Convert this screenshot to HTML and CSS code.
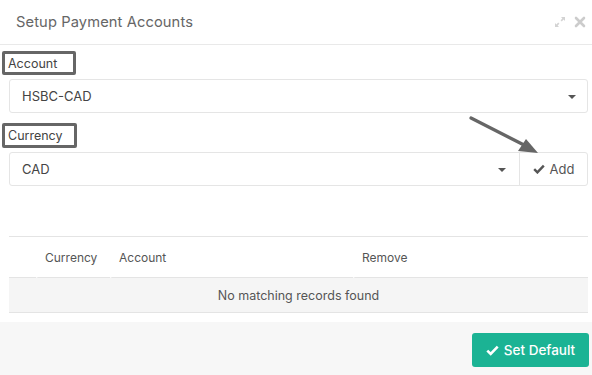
FILE: index.html
```html
<!DOCTYPE html>
<html>
<head>
<meta charset="utf-8">
<link rel="stylesheet" href="styles.css">
</head>
<body>
<div class="modal">
  <div class="header">
    <div class="title">Setup Payment Accounts</div>
    <div class="tools">
      <svg class="ico" width="12" height="12" viewBox="0 0 12 12"><path d="M7 1h4v4L9.6 3.6 7.8 5.4 6.6 4.2 8.4 2.4z M5 11H1V7l1.4 1.4 1.8-1.8 1.2 1.2-1.8 1.8z" fill="#d3d3d3"/></svg>
      <svg class="ico" width="12" height="12" viewBox="0 0 12 12"><path d="M2 2l8 8M10 2l-8 8" stroke="#cccccc" stroke-width="2.6" stroke-linecap="round"/></svg>
    </div>
  </div>
  <div class="body">
    <div class="lbl">Account</div>
    <div class="select">
      <span>HSBC-CAD</span>
      <span class="caret"></span>
    </div>
    <div class="lbl lbl2">Currency</div>
    <div class="group">
      <div class="select grow">
        <span>CAD</span>
        <span class="caret"></span>
      </div>
      <div class="addbtn"><svg width="12" height="10" viewBox="0 0 12 10"><path d="M1.2 5.2l3.2 3.2 6.4-6.8" stroke="#555" stroke-width="2.4" fill="none"/></svg>Add</div>
    </div>
    <table class="tbl">
      <thead>
        <tr><th class="c0"></th><th class="c1">Currency</th><th class="c2">Account</th><th class="c3">Remove</th></tr>
      </thead>
      <tbody>
        <tr><td colspan="4" class="empty">No matching records found</td></tr>
      </tbody>
    </table>
  </div>
  <div class="footer">
    <div class="btn"><svg width="13" height="11" viewBox="0 0 13 11"><path d="M1.3 5.6l3.4 3.4 7-7.4" stroke="#fff" stroke-width="2.6" fill="none"/></svg>Set Default</div>
  </div>
  <svg class="arrow" width="592" height="375" viewBox="0 0 592 375">
    <line x1="471" y1="118" x2="526" y2="146" stroke="#666" stroke-width="3.2" stroke-linecap="round"/>
    <path d="M538 153 L518 151 L526 139 Z" fill="#666"/>
  </svg>
</div>
</body>
</html>
```
FILE: styles.css
```css
* { box-sizing: border-box; }
html, body { margin: 0; padding: 0; }
body {
  font-family: "Inter", "Noto Sans", sans-serif;
  color: #555;
  background: #fff;
  width: 592px;
  height: 375px;
  overflow: hidden;
}
.modal {
  position: relative;
  width: 592px;
  height: 375px;
  display: flex;
  flex-direction: column;
}
.header {
  height: 45px;
  border-bottom: 1px solid #e9e9e9;
  display: flex;
  align-items: center;
  justify-content: space-between;
  padding: 0 6px 0 16px;
}
.title {
  font-size: 14.7px;
  color: #666;
  letter-spacing: 0.1px;
}
.tools { display: flex; gap: 8px; align-items: center; }
.body {
  flex: 1;
  padding: 6px 4px 0 9px;
}
.lbl {
  display: inline-block;
  width: 74px;
  font-size: 12.5px;
  color: #444;
  border: 3px solid #666;
  border-radius: 2px;
  margin-left: -7px;
  padding: 1px 0 1px 3px;
  line-height: 17px;
  height: 24px;
}
.lbl2 { width: 75px; margin-top: 10px; height: 25px; line-height: 18px; }
.select {
  margin-top: 4px;
  height: 34px;
  border: 1px solid #e5e5e5;
  border-radius: 3px;
  display: flex;
  align-items: center;
  justify-content: space-between;
  padding: 0 11px 0 12px;
  font-size: 13px;
  color: #444;
}
.caret {
  width: 0; height: 0;
  border-left: 4px solid transparent;
  border-right: 4px solid transparent;
  border-top: 4px solid #555;
  margin-top: 1px;
}
.group {
  display: flex;
  margin-top: 4px;
}
.group .select {
  margin-top: 0;
  flex: 1;
  border-radius: 3px 0 0 3px;
  padding-right: 13px;
}
.addbtn {
  width: 69px;
  height: 34px;
  border: 1px solid #e5e5e5;
  margin-left: -1px;
  border-radius: 0 3px 3px 0;
  display: flex;
  align-items: center;
  justify-content: center;
  gap: 5px;
  font-size: 13px;
  color: #555;
}
.tbl {
  margin-top: 50px;
  width: 579px;
  border-collapse: separate;
  border-spacing: 0;
  font-size: 12px;
  border-top: 1px solid #e4e4e4;
}
.tbl th {
  font-weight: normal;
  text-align: left;
  height: 41px;
  padding: 0 7px;
  color: #555;
  border-bottom: 1px solid #e4e4e4;
  border-left: 2px solid #fff;
}
.tbl th.c0 { width: 27px; border-left: 0; }
.tbl th.c1 { width: 74px; }
.tbl th.c2 { width: 243px; }
.tbl td.empty {
  height: 35px;
  background: #f5f5f5;
  text-align: center;
  color: #555;
  border-bottom: 1px solid #e4e4e4;
  font-size: 12.5px;
}
.footer {
  height: 53px;
  background: #f7f7f7;
  display: flex;
  justify-content: flex-end;
  align-items: flex-start;
  padding: 11px 3px 0 0;
}
.btn {
  width: 117px;
  height: 34px;
  background: #1bb394;
  color: #fff;
  border-radius: 3px;
  display: flex;
  align-items: center;
  justify-content: center;
  gap: 5px;
  font-size: 13.5px;
  font-weight: 500;
}
.arrow {
  position: absolute;
  left: 0;
  top: 0;
  pointer-events: none;
}
```
